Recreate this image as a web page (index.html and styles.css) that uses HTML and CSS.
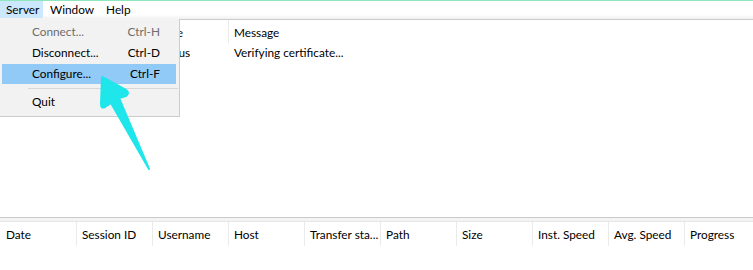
FILE: index.html
```html
<!DOCTYPE html>
<html lang="en">
<head>
  <meta charset="UTF-8">
  <title>Server</title>
  <link rel="stylesheet" href="styles.css">
</head>
<body>

  <div class="window">
    <div class="menubar">
      <span class="menu-item active">Server</span>
      <span class="menu-item">Window</span>
      <span class="menu-item">Help</span>
    </div>

    <div class="log-pane">
      <div class="row head">
        <div class="cell">Date</div>
        <div class="cell">Session ID</div>
        <div class="cell">Type</div>
        <div class="cell wide">Message</div>
      </div>
      <div class="row">
        <div class="cell"></div>
        <div class="cell"></div>
        <div class="cell">Status</div>
        <div class="cell wide">Verifying certificate...</div>
      </div>
    </div>

    <div class="splitter"></div>

    <div class="transfer-pane">
      <div class="row head">
        <div class="cell">Date</div>
        <div class="cell">Session ID</div>
        <div class="cell">Username</div>
        <div class="cell">Host</div>
        <div class="cell">Transfer sta...</div>
        <div class="cell">Path</div>
        <div class="cell">Size</div>
        <div class="cell">Inst. Speed</div>
        <div class="cell">Avg. Speed</div>
        <div class="cell">Progress</div>
      </div>
    </div>

    <!-- Server menu -->
    <div class="dropdown">
      <div class="drop-item disabled"><span>Connect...</span><span>Ctrl-H</span></div>
      <div class="drop-item"><span>Disconnect...</span><span>Ctrl-D</span></div>
      <div class="drop-item selected"><span>Configure...</span><span>Ctrl-F</span></div>
      <div class="drop-sep"></div>
      <div class="drop-item"><span>Quit</span><span></span></div>
    </div>

    <!-- annotation arrow -->
    <svg class="arrow" width="753" height="270" viewBox="0 0 753 270">
      <path d="M102 77 L126 90 Q130 93 126 96 L119 98 L149 169 L111 103 L105 107 Q101 109 101 104 Z"
            fill="#1ee6ea" stroke="#1ee6ea" stroke-width="2" stroke-linejoin="round"/>
    </svg>
  </div>

</body>
</html>
```

FILE: styles.css
```css
* {
  margin: 0;
  padding: 0;
  box-sizing: border-box;
}

body {
  background: #ffffff;
  color: #000000;
  font-family: 'Lato', 'Segoe UI', sans-serif;
  font-size: 11.8px;
}

.window {
  position: relative;
  width: 753px;
  height: 270px;
  display: flex;
  flex-direction: column;
  border-top: 1px solid #8fe6bd;
  overflow: hidden;
}

.menubar {
  height: 19px;
  display: flex;
  align-items: stretch;
  background: linear-gradient(#ffffff 14px, #f3f3f3 17px);
  border-bottom: 1px solid #cbcbcb;
}

.menu-item {
  padding: 0 6px;
  line-height: 17px;
  height: 17px;
}

.menu-item.active {
  background: #cce8ff;
  width: 43px;
  margin-right: 1px;
}

.log-pane {
  flex: 1;
}

.row {
  display: flex;
}

.row .cell {
  flex-shrink: 0;
  width: 76px;
  padding-left: 5px;
  border-left: 1px solid transparent;
  white-space: nowrap;
  line-height: 20px;
  height: 20px;
}

.row .cell:first-child {
  border-left: none;
  padding-left: 6px;
}

.row.head .cell {
  height: 23px;
  line-height: 25px;
  border-left-color: #eaeaea;
}

.row.head .cell:first-child {
  border-left: none;
}

.log-pane .row .cell.wide {
  width: 300px;
}

.log-pane .row:not(.head) .cell.wide {
  border-left-color: transparent;
}

.splitter {
  height: 5px;
  border-top: 1px solid #c9c9c9;
  border-bottom: 1px solid #e6e6e6;
  background: #f4f4f4;
}

.transfer-pane {
  height: 48px;
}

.transfer-pane .row.head .cell {
  height: 24px;
  line-height: 25px;
}

/* Dropdown */
.dropdown {
  position: absolute;
  top: 18px;
  left: 0;
  width: 180px;
  padding: 3px 3px 3px 2px;
  background: #f2f2f2;
  border-right: 1px solid #cccccc;
  border-bottom: 1px solid #cccccc;
}

.drop-item {
  display: flex;
  justify-content: space-between;
  height: 21px;
  line-height: 20px;
  padding: 0 16px 0 30px;
}

.drop-item.disabled {
  color: #6d6d6d;
}

.drop-item.selected {
  background: #91c9f7;
  height: 20px;
  margin-bottom: 1px;
}

.drop-sep {
  height: 7px;
  margin-left: 26px;
  margin-right: -2px;
  border-top: 3px solid transparent;
  border-bottom: 3px solid transparent;
  background: #d7d7d7;
  background-clip: content-box;
}

.arrow {
  position: absolute;
  top: -1px;
  left: 0;
  pointer-events: none;
}
```
